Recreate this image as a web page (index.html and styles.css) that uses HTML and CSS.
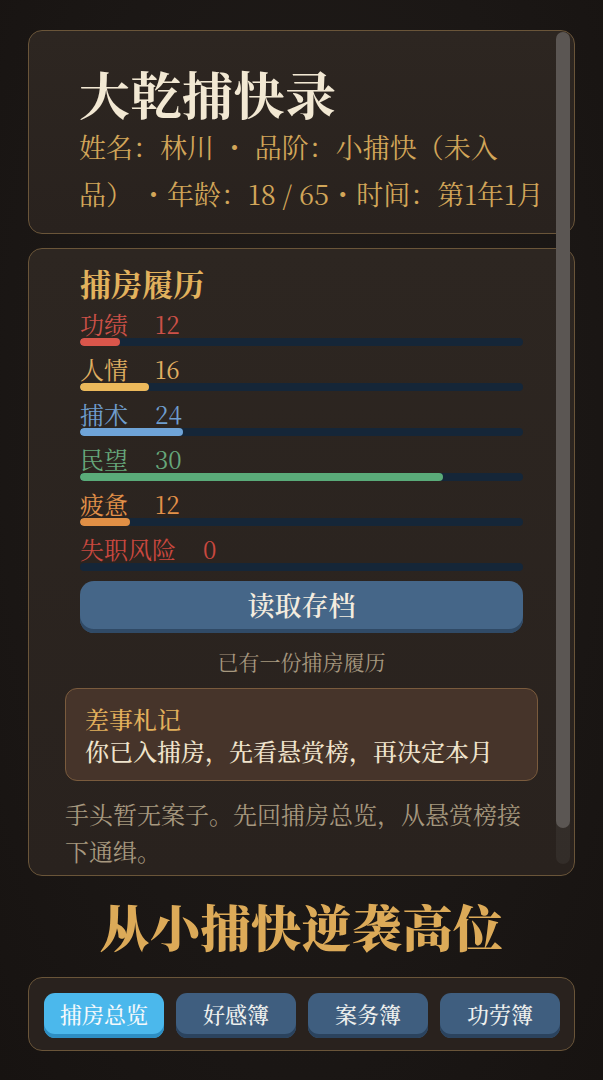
FILE: index.html
```html
<!DOCTYPE html>
<html lang="zh-CN">
<head>
<meta charset="utf-8">
<title>大乾捕快录</title>
<link rel="stylesheet" href="styles.css">
</head>
<body>
<div class="page">
  <div class="scroll">
    <section class="card card-head">
      <h1 class="game-title">大乾捕快录</h1>
      <p class="meta">姓名：林川 <span class="sep">·</span> 品阶：小捕快（未入品） <span class="sep">·</span>年龄：18 / 65<span class="sep">·</span>时间：第1年1月</p>
    </section>

    <section class="card card-main">
      <div class="inner">
        <h2 class="sec-title">捕房履历</h2>
        <div class="stats">
          <div class="stat red">
            <div class="stat-line"><span class="stat-name">功绩</span><span class="stat-val">12</span></div>
            <div class="bar"><div class="fill" style="width:40px"></div></div>
          </div>
          <div class="stat gold">
            <div class="stat-line"><span class="stat-name">人情</span><span class="stat-val">16</span></div>
            <div class="bar"><div class="fill" style="width:69px"></div></div>
          </div>
          <div class="stat blue">
            <div class="stat-line"><span class="stat-name">捕术</span><span class="stat-val">24</span></div>
            <div class="bar"><div class="fill" style="width:103px"></div></div>
          </div>
          <div class="stat green">
            <div class="stat-line"><span class="stat-name">民望</span><span class="stat-val">30</span></div>
            <div class="bar"><div class="fill" style="width:363px"></div></div>
          </div>
          <div class="stat orange">
            <div class="stat-line"><span class="stat-name">疲惫</span><span class="stat-val">12</span></div>
            <div class="bar"><div class="fill" style="width:50px"></div></div>
          </div>
          <div class="stat risk">
            <div class="stat-line"><span class="stat-name">失职风险</span><span class="stat-val">0</span></div>
            <div class="bar"><div class="fill" style="width:0"></div></div>
          </div>
        </div>
        <button class="load-btn">读取存档</button>
      </div>
      <p class="hint">已有一份捕房履历</p>
      <div class="note">
        <div class="note-title">差事札记</div>
        <div class="note-text">你已入捕房，先看悬赏榜，再决定本月</div>
      </div>
      <p class="desc">手头暂无案子。先回捕房总览，从悬赏榜接下通缉。</p>
    </section>

    <div class="scroll-track"><div class="scroll-thumb"></div></div>
  </div>

  <h1 class="slogan">从小捕快逆袭高位</h1>

  <nav class="tabs">
    <button class="tab active">捕房总览</button>
    <button class="tab">好感簿</button>
    <button class="tab">案务簿</button>
    <button class="tab">功劳簿</button>
  </nav>
</div>
</body>
</html>
```

FILE: styles.css
```css
* { box-sizing: border-box; }

html, body {
  margin: 0;
  padding: 0;
}

body {
  width: 603px;
  height: 1080px;
  overflow: hidden;
  background: radial-gradient(ellipse at 50% 40%, #211c19 0%, #1b1715 60%, #171311 100%);
  font-family: "Noto Serif CJK SC", "Noto Sans CJK SC", serif;
  color: #efe3cc;
}

.page {
  padding: 30px 28px 0;
}

.scroll {
  position: relative;
  display: flex;
  flex-direction: column;
  gap: 14px;
}

.card {
  background: linear-gradient(180deg, #2d2621 0%, #29221e 100%);
  border: 1px solid #6a5539;
  border-radius: 14px;
}

.card-head {
  height: 204px;
  padding: 32px 26px 0 50px;
}

.game-title {
  margin: 0;
  font-size: 51px;
  line-height: 60px;
  font-weight: 700;
  color: #f2e8d3;
  letter-spacing: 0.5px;
}

.meta {
  margin: 0;
  font-size: 27px;
  line-height: 47px;
  color: #d2a659;
}

.sep {
  font-feature-settings: "fwid" 1;
}

.card-main {
  height: 628px;
  padding: 14px 36px 0;
  overflow: hidden;
}

.inner {
  padding: 0 15px;
}

.sec-title {
  margin: 0;
  font-size: 31px;
  line-height: 40px;
  font-weight: 700;
  color: #e2b25d;
}

.stats {
  margin-top: 6px;
  display: flex;
  flex-direction: column;
}

.stat {
  height: 45px;
}

.stat-line {
  display: flex;
  align-items: center;
  height: 29px;
  font-size: 24px;
  line-height: 29px;
}

.stat-val {
  margin-left: 27px;
}

.bar {
  height: 8px;
  border-radius: 4px;
  background: #152638;
  overflow: hidden;
}

.fill {
  height: 100%;
  border-radius: 4px;
}

.red { color: #cc5148; }
.red .fill { background: #d9564b; }
.gold { color: #e0b062; }
.gold .fill { background: #ecb95b; }
.blue { color: #6f9dcd; }
.blue .fill { background: #6fa4d8; }
.green { color: #66a77b; }
.green .fill { background: #5aab79; }
.orange { color: #e39149; }
.orange .fill { background: #e08f45; }
.risk { color: #c9483f; }

.load-btn {
  display: block;
  width: 100%;
  height: 52px;
  margin-top: 2px;
  border: none;
  border-radius: 14px;
  background: #456688;
  box-shadow: inset 0 -4px 0 #304a66;
  color: #f3ecdf;
  font-family: inherit;
  font-size: 27px;
  font-weight: 600;
  line-height: 48px;
  padding: 0 0 4px;
}

.hint {
  margin: 14px 0 0;
  text-align: center;
  font-size: 21px;
  line-height: 28px;
  color: #a6987f;
}

.note {
  margin-top: 13px;
  height: 93px;
  padding: 14px 19px 0;
  background: #46342a;
  border: 1px solid #7a5b3d;
  border-radius: 12px;
}

.note-title {
  font-size: 24px;
  line-height: 32px;
  color: #e2b05c;
  font-weight: 500;
}

.note-text {
  font-size: 24px;
  line-height: 32px;
  color: #f0e4cd;
  font-weight: 500;
  white-space: nowrap;
}

.desc {
  margin: 14px 0 0;
  font-size: 24px;
  line-height: 37px;
  color: #a6987f;
}

.scroll-track {
  position: absolute;
  top: 2px;
  left: 528px;
  width: 14px;
  height: 832px;
  border-radius: 7px;
  background: rgba(255, 255, 255, 0.05);
}

.scroll-thumb {
  height: 796px;
  border-radius: 7px;
  background: #5b5653;
}

.slogan {
  margin: 19px 0 0;
  text-align: center;
  font-size: 50px;
  line-height: 60px;
  font-weight: 900;
  color: #dcaa58;
  letter-spacing: 0.5px;
}

.tabs {
  margin-top: 22px;
  height: 74px;
  padding: 15px 14px 0 15px;
  display: grid;
  grid-template-columns: repeat(4, 1fr);
  gap: 12px;
  background: #29221e;
  border: 1px solid #6a5539;
  border-radius: 14px;
  align-items: start;
}

.tab {
  height: 45px;
  border: none;
  border-radius: 11px;
  background: #3f5e7f;
  box-shadow: inset 0 -4px 0 #2b435e;
  color: #eef0ee;
  font-family: inherit;
  font-size: 22px;
  font-weight: 500;
  line-height: 41px;
  padding: 0 0 4px;
}

.tab.active {
  background: #4bb8ec;
  box-shadow: inset 0 -4px 0 #2d8ec3;
  color: #f5f9fb;
}
```
